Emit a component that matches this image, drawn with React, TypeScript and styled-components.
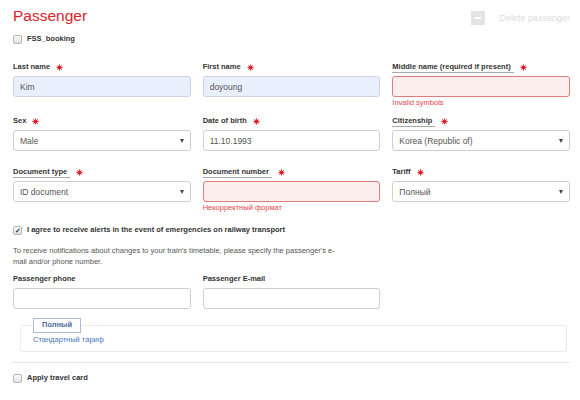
import React from 'react';
import styled, { createGlobalStyle } from 'styled-components';

const GlobalStyle = createGlobalStyle`
  body {
    margin: 0;
    background: #fff;
    font-family: "Liberation Sans", Arial, sans-serif;
    color: #333;
  }
`;

const Page = styled.div`
  width: 580px;
  padding: 0 10px 0 13px;
  box-sizing: border-box;
`;

const Header = styled.div`
  display: flex;
  justify-content: space-between;
  align-items: flex-start;
  padding-top: 5px;
`;

const Title = styled.h1`
  margin: 0;
  font-size: 15.5px;
  line-height: 22px;
  font-weight: normal;
  color: #d8232a;
`;

const DeleteButton = styled.div`
  display: flex;
  align-items: center;
  gap: 14px;
  margin-top: 6px;
  font-size: 9px;
  color: #dcdcdc;
`;

const MinusBox = styled.span`
  width: 14px;
  height: 14px;
  background: #e4e4e4;
  display: flex;
  align-items: center;
  justify-content: center;

  &::after {
    content: '';
    width: 6px;
    height: 2px;
    background: #fff;
  }
`;

const CheckRow = styled.label<{ $top: number }>`
  display: flex;
  align-items: center;
  gap: 5px;
  margin-top: ${({ $top }) => $top}px;
  font-size: 7.5px;
  line-height: 12px;
  font-weight: bold;
  color: #333;
`;

const Box = styled.span`
  width: 7px;
  height: 7px;
  border: 1px solid #b5b5b5;
  border-radius: 2px;
  background: linear-gradient(#fafafa, #e2e2e2);
  display: flex;
  align-items: center;
  justify-content: center;
  font-size: 7px;
  line-height: 7px;
  color: #333;
`;

const Grid = styled.div<{ $top: number }>`
  display: grid;
  grid-template-columns: repeat(3, 1fr);
  column-gap: 12px;
  row-gap: 15px;
  margin-top: ${({ $top }) => $top}px;
`;

const Field = styled.div`
  display: flex;
  flex-direction: column;
  min-width: 0;
`;

const LabelRow = styled.div`
  display: flex;
  align-items: center;
  gap: 6px;
  height: 12px;
  margin-bottom: 3px;
`;

const Label = styled.span<{ $underline?: boolean }>`
  font-size: 7.5px;
  font-weight: bold;
  color: #333;
  line-height: 11px;
  border-bottom: ${({ $underline }) => ($underline ? '1px solid #a9a9a9' : '1px solid transparent')};
  padding-right: ${({ $underline }) => ($underline ? '3px' : '0')};
`;

type Variant = 'plain' | 'filled' | 'error';

const Control = styled.div<{ $variant: Variant }>`
  height: 21px;
  box-sizing: border-box;
  border-radius: 3px;
  border: 1px solid
    ${({ $variant }) =>
      $variant === 'error' ? '#e27b7b' : $variant === 'filled' ? '#c9d3e3' : '#cfcfcf'};
  background: ${({ $variant }) =>
    $variant === 'error' ? '#fdeeee' : $variant === 'filled' ? '#e8f0fe' : '#fff'};
  display: flex;
  align-items: center;
  justify-content: space-between;
  padding: 0 6px 0 6px;
  font-size: 8.5px;
  color: #555;
`;

const Arrow = styled.span`
  width: 0;
  height: 0;
  border-left: 2.5px solid transparent;
  border-right: 2.5px solid transparent;
  border-top: 4px solid #444;
`;

const ErrorText = styled.div`
  font-size: 7.5px;
  line-height: 10px;
  margin-top: 1px;
  margin-bottom: -8px;
  color: #e0474c;
`;

const Star = () => (
  <svg width="7" height="7" viewBox="0 0 8 8">
    <g stroke="#e31e24" strokeWidth="0.9" strokeLinecap="round">
      <line x1="4" y1="0.8" x2="4" y2="7.2" />
      <line x1="0.8" y1="4" x2="7.2" y2="4" />
      <line x1="1.8" y1="1.8" x2="6.2" y2="6.2" />
      <line x1="6.2" y1="1.8" x2="1.8" y2="6.2" />
    </g>
    <circle cx="4" cy="4" r="2.4" fill="#e31e24" />
  </svg>
);

const Note = styled.p`
  margin: 9px 0 0 0;
  font-size: 7.5px;
  line-height: 11px;
  color: #555;
`;

const TariffSet = styled.fieldset`
  margin: 9px 3px 0 7px;
  padding: 1px 12px 6px 12px;
  border: 1px solid #ececec;
  border-radius: 2px;
`;

const TariffTag = styled.legend`
  padding: 1px 8px 2px 8px;
  border: 1px solid #a8bcd6;
  font-size: 7.5px;
  line-height: 10px;
  font-weight: bold;
  color: #4d6d9a;
`;

const TariffName = styled.div`
  font-size: 7.5px;
  line-height: 11px;
  color: #4a78b8;
`;

const Divider = styled.hr`
  border: 0;
  border-top: 1px solid #e6e6e6;
  margin: 10px 0 0 -1px;
`;

interface FieldDef {
  label: string;
  value?: string;
  variant: Variant;
  required?: boolean;
  underline?: boolean;
  select?: boolean;
  error?: string;
}

const rows: FieldDef[] = [
  { label: 'Last name', value: 'Kim', variant: 'filled', required: true },
  { label: 'First name', value: 'doyoung', variant: 'filled', required: true },
  { label: 'Middle name (required if present)', variant: 'error', required: true, underline: true, error: 'Invalid symbols' },
  { label: 'Sex', value: 'Male', variant: 'plain', required: true, select: true },
  { label: 'Date of birth', value: '11.10.1993', variant: 'plain', required: true },
  { label: 'Citizenship', value: 'Korea (Republic of)', variant: 'plain', required: true, underline: true, select: true },
  { label: 'Document type', value: 'ID document', variant: 'plain', required: true, underline: true, select: true },
  { label: 'Document number', variant: 'error', required: true, underline: true, error: 'Некорректный формат' },
  { label: 'Tariff', value: 'Полный', variant: 'plain', required: true, select: true },
];

const FormField: React.FC<{ f: FieldDef }> = ({ f }) => (
  <Field>
    <LabelRow>
      <Label $underline={f.underline}>{f.label}</Label>
      {f.required && <Star />}
    </LabelRow>
    <Control $variant={f.variant}>
      <span>{f.value}</span>
      {f.select && <Arrow />}
    </Control>
    {f.error && <ErrorText>{f.error}</ErrorText>}
  </Field>
);

export default function App() {
  return (
    <Page>
      <GlobalStyle />
      <Header>
        <Title>Passenger</Title>
        <DeleteButton>
          <MinusBox />
          <span>Delete passenger</span>
        </DeleteButton>
      </Header>

      <CheckRow $top={6}>
        <Box />
        FSS_booking
      </CheckRow>

      <Grid $top={16}>
        {rows.map((f) => (
          <FormField key={f.label} f={f} />
        ))}
      </Grid>

      <CheckRow $top={19}>
        <Box>✓</Box>
        I agree to receive alerts in the event of emergencies on railway transport
      </CheckRow>

      <Note>
        To receive notifications about changes to your train's timetable, please specify the passenger's e-
        <br />
        mail and/or phone number.
      </Note>

      <Grid $top={6}>
        <FormField f={{ label: 'Passenger phone', variant: 'plain' }} />
        <FormField f={{ label: 'Passenger E-mail', variant: 'plain' }} />
      </Grid>

      <TariffSet>
        <TariffTag>Полный</TariffTag>
        <TariffName>Стандартный тариф</TariffName>
      </TariffSet>

      <Divider />

      <CheckRow $top={9}>
        <Box />
        Apply travel card
      </CheckRow>
    </Page>
  );
}
